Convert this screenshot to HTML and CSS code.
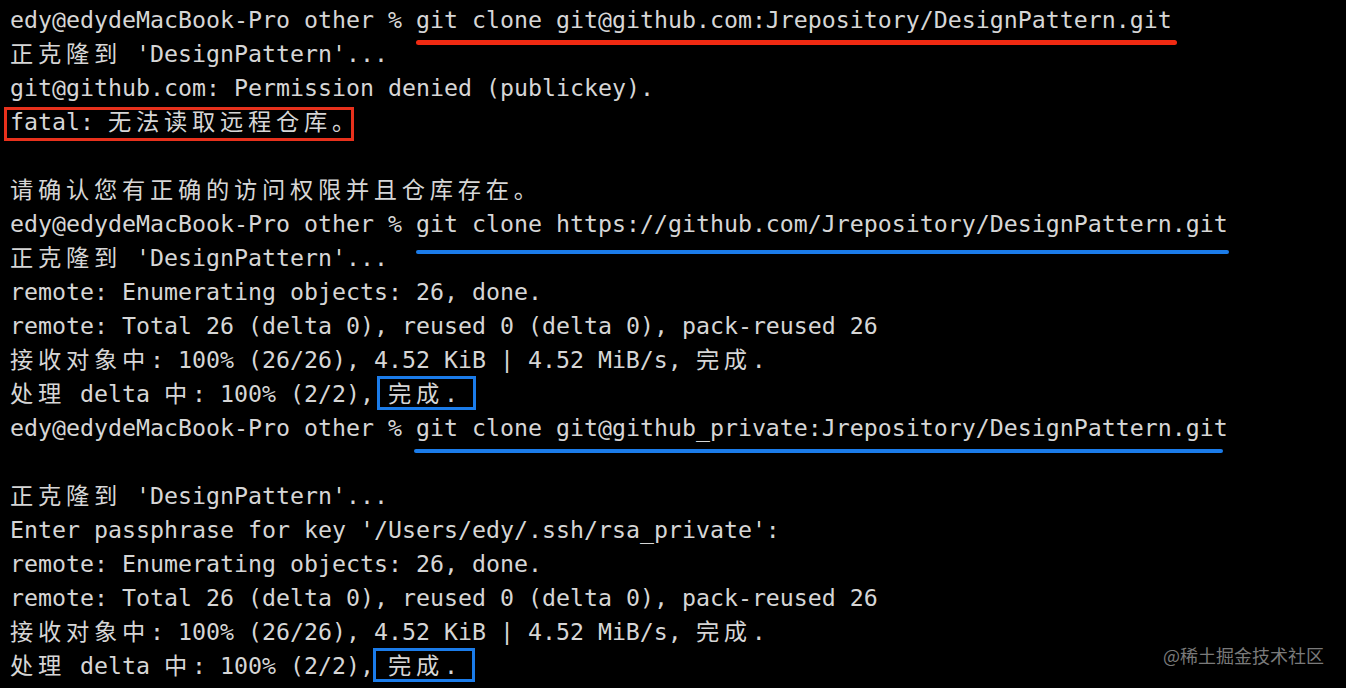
FILE: index.html
```html
<!DOCTYPE html>
<html lang="zh">
<head>
<meta charset="utf-8">
<title>Terminal</title>
<link rel="stylesheet" href="styles.css">
</head>
<body>
<div class="term">
  <div class="ln">edy@edydeMacBook-Pro other % git clone git@github.com:Jrepository/DesignPattern.git</div>
  <div class="ln"><span class="c">正克隆到</span> 'DesignPattern'...</div>
  <div class="ln">git@github.com: Permission denied (publickey).</div>
  <div class="ln">fatal: <span class="c">无法读取远程仓库。</span></div>
  <div class="ln"> </div>
  <div class="ln"><span class="c">请确认您有正确的访问权限并且仓库存在。</span></div>
  <div class="ln">edy@edydeMacBook-Pro other % git clone https://github.com/Jrepository/DesignPattern.git</div>
  <div class="ln"><span class="c">正克隆到</span> 'DesignPattern'...</div>
  <div class="ln">remote: Enumerating objects: 26, done.</div>
  <div class="ln">remote: Total 26 (delta 0), reused 0 (delta 0), pack-reused 26</div>
  <div class="ln"><span class="c">接收对象中</span>: 100% (26/26), 4.52 KiB | 4.52 MiB/s, <span class="c">完成</span>.</div>
  <div class="ln"><span class="c">处理</span> delta <span class="c">中</span>: 100% (2/2), <span class="c">完成</span>.</div>
  <div class="ln">edy@edydeMacBook-Pro other % git clone git@github_private:Jrepository/DesignPattern.git</div>
  <div class="ln"> </div>
  <div class="ln"><span class="c">正克隆到</span> 'DesignPattern'...</div>
  <div class="ln">Enter passphrase for key '/Users/edy/.ssh/rsa_private':</div>
  <div class="ln">remote: Enumerating objects: 26, done.</div>
  <div class="ln">remote: Total 26 (delta 0), reused 0 (delta 0), pack-reused 26</div>
  <div class="ln"><span class="c">接收对象中</span>: 100% (26/26), 4.52 KiB | 4.52 MiB/s, <span class="c">完成</span>.</div>
  <div class="ln"><span class="c">处理</span> delta <span class="c">中</span>: 100% (2/2), <span class="c">完成</span>.</div>

  <div class="mark red-line"></div>
  <div class="mark red-box"></div>
  <div class="mark blue-line l1"></div>
  <div class="mark blue-box b1"></div>
  <div class="mark blue-line l2"></div>
  <div class="mark blue-box b2"></div>

  <div class="watermark">@稀土掘金技术社区</div>
</div>
</body>
</html>
```
FILE: styles.css
```css
html, body {
  margin: 0;
  padding: 0;
  background: #000;
}
body {
  width: 1346px;
  height: 688px;
  overflow: hidden;
}
.term {
  position: relative;
  height: 688px;
  box-sizing: border-box;
  padding: 3px 0 0 10px;
  font-family: "DejaVu Sans Mono", "Noto Sans CJK SC", monospace;
  font-size: 23.26px;
  line-height: 34px;
  color: #d6d6d6;
}
.ln {
  white-space: pre;
  height: 34px;
}
.c {
  font-family: "Noto Sans CJK SC", sans-serif;
  letter-spacing: 4.74px;
  line-height: 1;
}
.mark {
  position: absolute;
}
.red-line {
  left: 416px;
  top: 40px;
  width: 761px;
  height: 5px;
  border-radius: 3px;
  background: #f02a12;
}
.red-box {
  left: 4px;
  top: 107px;
  width: 344px;
  height: 28px;
  border: 3px solid #e8311c;
}
.blue-line {
  height: 4px;
  border-radius: 2px;
  background: #1b7cea;
}
.blue-line.l1 {
  left: 416px;
  top: 250px;
  width: 813px;
}
.blue-line.l2 {
  left: 414px;
  top: 449px;
  width: 809px;
}
.blue-box {
  border: 3px solid #1b7cea;
  height: 28px;
}
.blue-box.b1 {
  left: 377px;
  top: 376px;
  width: 93px;
}
.blue-box.b2 {
  left: 373px;
  top: 648px;
  width: 96px;
}
.watermark {
  position: absolute;
  left: 1163px;
  top: 643px;
  font-family: "Noto Sans CJK SC", sans-serif;
  font-size: 18px;
  line-height: 24px;
  color: #7a7a7a;
  white-space: nowrap;
}
```
